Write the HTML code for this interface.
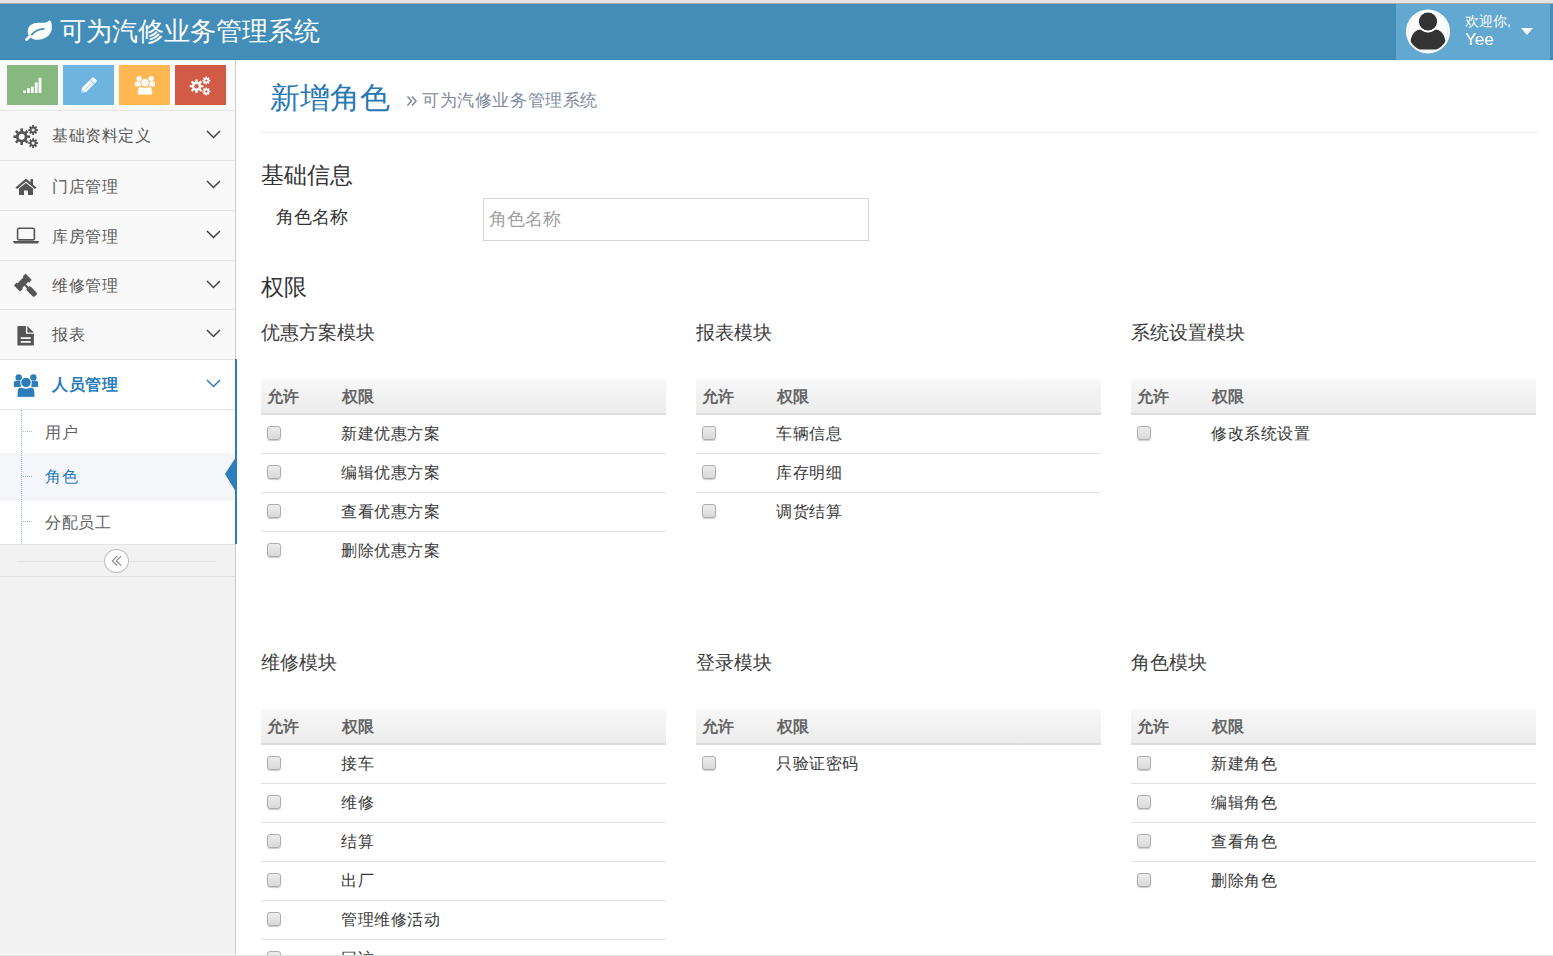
<!DOCTYPE html>
<html><head><meta charset="utf-8">
<style>
*{box-sizing:border-box}
html,body{margin:0;padding:0}
body{width:1553px;height:956px;overflow:hidden;position:relative;background:#fff;font-family:"Liberation Sans",sans-serif;color:#393939}
.abs{position:absolute}
.txt{position:absolute;white-space:nowrap;line-height:1}
#topstrip{left:0;top:0;width:1553px;height:3px;background:#e3e3e3}
#topline{left:0;top:3px;width:1553px;height:1px;background:#b2adaa}
#navbar{left:0;top:4px;width:1553px;height:56px;background:#438eb9}
#navline{left:0;top:59px;width:1553px;height:1px;background:#3a84b4}
#usr{left:1396px;top:4px;width:154px;height:56px;background:#62a8d1}
#botstrip{left:0;top:955px;width:1553px;height:1px;background:#dcdcdc}
/* sidebar */
#sidebar{left:0;top:60px;width:236px;height:894px;background:#f2f2f2;border-right:1px solid #cccccc}
.sc{top:65px;width:51px;height:40px}
.hl{height:1px;background:#e4e4e4}
.item{left:0;width:235px;background:#f9f9f9}
.mtxt{font-size:16.25px;letter-spacing:0.5px;color:#585858}
.chev{position:absolute;left:206px;width:15px;height:9px}

.ttl{font-size:18.75px;color:#3d3d3d;margin-top:1px}
.th{position:absolute;height:36px;background:linear-gradient(#f8f8f8,#ececec);border-bottom:2px solid #dddddd}
.tht{font-size:16.25px;font-weight:bold;color:#666666}
.rl{position:absolute;height:1px;background:#e1e1e1}
.cb{position:absolute;width:14px;height:14px;border:1px solid #adadad;border-radius:3px;background:linear-gradient(#ececec,#d9d9d9);box-shadow:0 1px 1px rgba(0,0,0,.2)}
.rt{font-size:16.4px;letter-spacing:0.5px;color:#393939}
</style></head>
<body>
<div id="topstrip" class="abs"></div>
<div id="topline" class="abs"></div>
<div id="navbar" class="abs"></div>
<div id="navline" class="abs"></div>
<div id="usr" class="abs"></div>

<!-- brand -->
<svg class="abs" style="left:20px;top:15px" width="36" height="30" viewBox="0 0 36 30">
 <path d="M29.5 5.2 C31.5 6 31.9 9 31.9 12.5 C31.9 19.5 25.5 24.8 17.5 24.8 C12 24.8 7.7 21.5 7.7 16.5 C7.7 11 12.5 7.8 18.5 7.8 L24 7.8 C26.5 7.8 28 6.5 29.5 5.2 Z" fill="#fff"/>
 <line x1="10.5" y1="20.8" x2="6.6" y2="24.6" stroke="#fff" stroke-width="2.8" stroke-linecap="round"/>
 <path d="M11.8 19.6 C14.5 16.3 18.5 14 23.8 13.8" fill="none" stroke="#438eb9" stroke-width="1.7" stroke-linecap="round"/>
</svg>
<div class="txt" style="left:60px;top:19px;font-size:25.8px;color:#fff">可为汽修业务管理系统</div>

<!-- user -->
<svg class="abs" style="left:1405px;top:8.5px" width="46" height="46" viewBox="0 0 46 46">
 <circle cx="23" cy="22.5" r="22" fill="#fff"/>
 <circle cx="23" cy="22.5" r="19.5" fill="none" stroke="#dfeaf2" stroke-width="0.8"/>
 <defs><clipPath id="cc"><circle cx="23" cy="22.5" r="20"/></clipPath></defs>
 <g clip-path="url(#cc)" fill="#333">
  <circle cx="23" cy="12.5" r="9.3"/>
  <path d="M5 40.5 L5.5 33 C6 25 11 20.5 16 20.5 C18 22.5 20.5 23.5 23 23.5 C25.5 23.5 28 22.5 30 20.5 C35 20.5 40 25 40.5 33 L41 40.5 Z"/>
 </g>
 <circle cx="23" cy="12.5" r="10" fill="none" stroke="#fff" stroke-width="1.5"/>
</svg>
<div class="txt" style="left:1465px;top:14.5px;font-size:13.5px;color:#fff">欢迎你,</div>
<div class="txt" style="left:1465px;top:30.5px;font-size:17px;color:#fff">Yee</div>
<svg class="abs" style="left:1520px;top:27px" width="14" height="9" viewBox="0 0 14 9"><path d="M1 1 L13 1 L7 8 Z" fill="#fff"/></svg>



<!-- MAIN -->
<div class="txt" style="left:270px;top:82.5px;font-size:30px;color:#2679b5">新增角色</div>
<svg class="abs" style="left:406px;top:95px" width="12" height="12" viewBox="0 0 12 12"><path d="M1.5 1.5 L5.5 6 L1.5 10.5 M6 1.5 L10 6 L6 10.5" fill="none" stroke="#8089a0" stroke-width="1.6"/></svg>
<div class="txt" style="left:422px;top:91.5px;font-size:17.2px;letter-spacing:0.6px;color:#8089a0">可为汽修业务管理系统</div>
<div class="abs" style="left:261px;top:132px;width:1276px;height:0;border-top:1px dotted #e2e2e2"></div>
<div class="txt" style="left:261px;top:163.5px;font-size:23px;color:#333">基础信息</div>
<div class="txt" style="left:276px;top:209px;font-size:17.5px;color:#333">角色名称</div>
<div class="abs" style="left:483px;top:198px;width:386px;height:43px;border:1px solid #d5d5d5;background:#fff"></div>
<div class="txt" style="left:489px;top:211px;font-size:17.5px;color:#a0a0a0">角色名称</div>
<div class="txt" style="left:261px;top:275.5px;font-size:23px;color:#333">权限</div>
<div class="txt ttl" style="left:261px;top:323px">优惠方案模块</div>
<div class="th" style="left:261px;top:379px;width:405px"></div>
<div class="txt tht" style="left:267px;top:388px">允许</div>
<div class="txt tht" style="left:342px;top:388px">权限</div>
<div class="cb" style="left:267px;top:426px"></div>
<div class="txt rt" style="left:341px;top:425px">新建优惠方案</div>
<div class="rl" style="left:261px;top:453px;width:405px"></div>
<div class="cb" style="left:267px;top:465px"></div>
<div class="txt rt" style="left:341px;top:464px">编辑优惠方案</div>
<div class="rl" style="left:261px;top:492px;width:405px"></div>
<div class="cb" style="left:267px;top:504px"></div>
<div class="txt rt" style="left:341px;top:503px">查看优惠方案</div>
<div class="rl" style="left:261px;top:531px;width:405px"></div>
<div class="cb" style="left:267px;top:543px"></div>
<div class="txt rt" style="left:341px;top:542px">删除优惠方案</div>
<div class="txt ttl" style="left:696px;top:323px">报表模块</div>
<div class="th" style="left:696px;top:379px;width:405px"></div>
<div class="txt tht" style="left:702px;top:388px">允许</div>
<div class="txt tht" style="left:777px;top:388px">权限</div>
<div class="cb" style="left:702px;top:426px"></div>
<div class="txt rt" style="left:776px;top:425px">车辆信息</div>
<div class="rl" style="left:696px;top:453px;width:405px"></div>
<div class="cb" style="left:702px;top:465px"></div>
<div class="txt rt" style="left:776px;top:464px">库存明细</div>
<div class="rl" style="left:696px;top:492px;width:405px"></div>
<div class="cb" style="left:702px;top:504px"></div>
<div class="txt rt" style="left:776px;top:503px">调货结算</div>
<div class="txt ttl" style="left:1131px;top:323px">系统设置模块</div>
<div class="th" style="left:1131px;top:379px;width:405px"></div>
<div class="txt tht" style="left:1137px;top:388px">允许</div>
<div class="txt tht" style="left:1212px;top:388px">权限</div>
<div class="cb" style="left:1137px;top:426px"></div>
<div class="txt rt" style="left:1211px;top:425px">修改系统设置</div>
<div class="txt ttl" style="left:261px;top:653px">维修模块</div>
<div class="th" style="left:261px;top:709px;width:405px"></div>
<div class="txt tht" style="left:267px;top:718px">允许</div>
<div class="txt tht" style="left:342px;top:718px">权限</div>
<div class="cb" style="left:267px;top:756px"></div>
<div class="txt rt" style="left:341px;top:755px">接车</div>
<div class="rl" style="left:261px;top:783px;width:405px"></div>
<div class="cb" style="left:267px;top:795px"></div>
<div class="txt rt" style="left:341px;top:794px">维修</div>
<div class="rl" style="left:261px;top:822px;width:405px"></div>
<div class="cb" style="left:267px;top:834px"></div>
<div class="txt rt" style="left:341px;top:833px">结算</div>
<div class="rl" style="left:261px;top:861px;width:405px"></div>
<div class="cb" style="left:267px;top:873px"></div>
<div class="txt rt" style="left:341px;top:872px">出厂</div>
<div class="rl" style="left:261px;top:900px;width:405px"></div>
<div class="cb" style="left:267px;top:912px"></div>
<div class="txt rt" style="left:341px;top:911px">管理维修活动</div>
<div class="rl" style="left:261px;top:939px;width:405px"></div>
<div class="cb" style="left:267px;top:951px"></div>
<div class="txt rt" style="left:341px;top:950px">回访</div>
<div class="txt ttl" style="left:696px;top:653px">登录模块</div>
<div class="th" style="left:696px;top:709px;width:405px"></div>
<div class="txt tht" style="left:702px;top:718px">允许</div>
<div class="txt tht" style="left:777px;top:718px">权限</div>
<div class="cb" style="left:702px;top:756px"></div>
<div class="txt rt" style="left:776px;top:755px">只验证密码</div>
<div class="txt ttl" style="left:1131px;top:653px">角色模块</div>
<div class="th" style="left:1131px;top:709px;width:405px"></div>
<div class="txt tht" style="left:1137px;top:718px">允许</div>
<div class="txt tht" style="left:1212px;top:718px">权限</div>
<div class="cb" style="left:1137px;top:756px"></div>
<div class="txt rt" style="left:1211px;top:755px">新建角色</div>
<div class="rl" style="left:1131px;top:783px;width:405px"></div>
<div class="cb" style="left:1137px;top:795px"></div>
<div class="txt rt" style="left:1211px;top:794px">编辑角色</div>
<div class="rl" style="left:1131px;top:822px;width:405px"></div>
<div class="cb" style="left:1137px;top:834px"></div>
<div class="txt rt" style="left:1211px;top:833px">查看角色</div>
<div class="rl" style="left:1131px;top:861px;width:405px"></div>
<div class="cb" style="left:1137px;top:873px"></div>
<div class="txt rt" style="left:1211px;top:872px">删除角色</div>

<!-- SIDEBAR -->
<div id="sidebar" class="abs"></div>
<div class="abs" style="left:0;top:60px;width:235px;height:1px;background:#fff"></div>
<div class="abs" style="left:0;top:61px;width:235px;height:49px;background:#fafafa"></div>
<div class="abs sc" style="left:7px;background:#87b87f"></div>
<div class="abs sc" style="left:63px;background:#6fb3e0"></div>
<div class="abs sc" style="left:119px;background:#ffb752"></div>
<div class="abs sc" style="left:175px;background:#d15b47"></div>
<!-- shortcut icons -->
<svg class="abs" style="left:23px;top:77px" width="20" height="17" viewBox="0 0 20 17" fill="#fff">
 <rect x="0.2" y="13.6" width="2.8" height="2.3"/><rect x="4" y="11.2" width="2.8" height="4.7"/><rect x="7.9" y="9.7" width="2.8" height="6.2"/><rect x="11.8" y="5.5" width="2.8" height="10.4"/><rect x="15.6" y="0.9" width="2.8" height="15"/>
</svg>
<svg class="abs" style="left:76px;top:73px" width="26" height="26" viewBox="0 0 26 26">
 <g transform="translate(5.4,19.6) rotate(-45) scale(0.86,1.12)">
  <path d="M0 0 L4.5 -2.6 L21.5 -2.6 C22.3 -2.6 22.8 -2.1 22.8 -1.3 L22.8 1.3 C22.8 2.1 22.3 2.6 21.5 2.6 L4.5 2.6 Z" fill="#fff"/>
  <line x1="5.5" y1="0.4" x2="16" y2="0.4" stroke="#6fb3e0" stroke-width="0.7"/>
  <line x1="17.8" y1="-2.8" x2="17.8" y2="2.8" stroke="#6fb3e0" stroke-width="0.9"/>
  <path d="M1.6 0 L3.4 -0.9 L3.4 0.9 Z" fill="#6fb3e0"/>
 </g>
</svg>
<svg class="abs" style="left:133.6px;top:75.3px" width="22" height="21" viewBox="0 0 26 25.6" fill="#fff">
 <circle cx="5.7" cy="4.4" r="3.2"/><circle cx="20.4" cy="4.4" r="3.2"/>
 <path d="M0.9 13.9 L0.9 10 C0.9 8.5 1.8 7.8 3 7.8 L7.8 7.8 L7.8 13.9 Z"/>
 <path d="M25.1 13.9 L25.1 10 C25.1 8.5 24.2 7.8 23 7.8 L18.4 7.8 L18.4 13.9 Z"/>
 <circle cx="13" cy="9.4" r="5.2" stroke="#ffb752" stroke-width="1"/>
 <path d="M5.4 24.3 C4.6 24.3 4 23.7 4 23 L4.4 18 C4.6 15.5 5.8 14.2 8 14.2 C10 15 11.5 15.3 13 15.3 C14.5 15.3 16 15 18 14.2 C20.2 14.2 21.4 15.5 21.6 18 L22 23 C22 23.7 21.4 24.3 20.6 24.3 Z" stroke="#ffb752" stroke-width="0.8"/>
</svg>
<svg class="abs" style="left:189px;top:76px" width="24" height="20" viewBox="0 0 24 20"><circle cx="7.5" cy="10.2" r="4.6" fill="#fff"/><g stroke="#fff" stroke-width="2.2"><line x1="0.70" y1="10.20" x2="14.30" y2="10.20"/><line x1="2.69" y1="5.39" x2="12.31" y2="15.01"/><line x1="7.50" y1="3.40" x2="7.50" y2="17.00"/><line x1="12.31" y1="5.39" x2="2.69" y2="15.01"/></g><circle cx="7.5" cy="10.2" r="2.3" fill="#d15b47"/><circle cx="17.3" cy="4.6" r="2.8" fill="#fff"/><g stroke="#fff" stroke-width="1.5"><line x1="13.30" y1="4.60" x2="21.30" y2="4.60"/><line x1="14.47" y1="1.77" x2="20.13" y2="7.43"/><line x1="17.30" y1="0.60" x2="17.30" y2="8.60"/><line x1="20.13" y1="1.77" x2="14.47" y2="7.43"/></g><circle cx="17.3" cy="4.6" r="1.2" fill="#d15b47"/><circle cx="17.3" cy="15.4" r="2.8" fill="#fff"/><g stroke="#fff" stroke-width="1.5"><line x1="13.30" y1="15.40" x2="21.30" y2="15.40"/><line x1="14.47" y1="12.57" x2="20.13" y2="18.23"/><line x1="17.30" y1="11.40" x2="17.30" y2="19.40"/><line x1="20.13" y1="12.57" x2="14.47" y2="18.23"/></g><circle cx="17.3" cy="15.4" r="1.2" fill="#d15b47"/></svg>
<div class="abs hl" style="left:0;top:110px;width:235px"></div>

<!-- menu items -->
<div class="abs item" style="top:111px;height:49px"></div>
<div class="abs hl" style="left:0;top:160px;width:235px"></div>
<div class="abs item" style="top:161px;height:49px"></div>
<div class="abs hl" style="left:0;top:210px;width:235px"></div>
<div class="abs item" style="top:211px;height:49px"></div>
<div class="abs hl" style="left:0;top:260px;width:235px"></div>
<div class="abs item" style="top:261px;height:48px"></div>
<div class="abs hl" style="left:0;top:309px;width:235px"></div>
<div class="abs item" style="top:310px;height:49px"></div>
<div class="abs hl" style="left:0;top:359px;width:235px"></div>
<div class="abs" style="left:0;top:360px;width:235px;height:184px;background:#fff"></div>
<div class="abs hl" style="left:0;top:409px;width:235px"></div>
<div class="abs" style="left:0;top:455px;width:235px;height:44px;background:#f4f6f9"></div>
<div class="abs" style="left:0;top:454px;width:235px;height:0;border-top:1px dotted #e0e0e0"></div>
<div class="abs" style="left:0;top:499px;width:235px;height:0;border-top:1px dotted #e0e0e0"></div>
<div class="abs hl" style="left:0;top:544px;width:235px"></div>
<div class="abs" style="left:21px;top:410px;width:0;height:134px;border-left:1px dotted #9dbdd6"></div>
<div class="abs" style="left:23px;top:431px;width:9px;height:0;border-top:1px dotted #9dbdd6"></div>
<div class="abs" style="left:23px;top:476px;width:9px;height:0;border-top:1px dotted #9dbdd6"></div>
<div class="abs" style="left:23px;top:521px;width:9px;height:0;border-top:1px dotted #9dbdd6"></div>
<div class="abs" style="left:235px;top:359px;width:2px;height:185px;background:#2b7dbc"></div>
<svg class="abs" style="left:225px;top:457px" width="11" height="35" viewBox="0 0 11 35"><path d="M11 0 L0 17 L11 35 Z" fill="#2b7dbc"/></svg>

<div class="txt mtxt" style="left:52px;top:127px">基础资料定义</div>
<div class="txt mtxt" style="left:52px;top:178px">门店管理</div>
<div class="txt mtxt" style="left:52px;top:228px">库房管理</div>
<div class="txt mtxt" style="left:52px;top:277px">维修管理</div>
<div class="txt mtxt" style="left:52px;top:326px">报表</div>
<div class="txt mtxt" style="left:52px;top:376px;color:#2b7dbc;font-weight:bold">人员管理</div>
<div class="txt mtxt" style="left:45px;top:423.5px;color:#616161">用户</div>
<div class="txt mtxt" style="left:45px;top:467.5px;color:#2b7dbc">角色</div>
<div class="txt mtxt" style="left:45px;top:513.5px;color:#616161">分配员工</div>

<svg class="chev" style="top:130px" viewBox="0 0 15 9"><path d="M1 1 L7.5 7.5 L14 1" fill="none" stroke="#444" stroke-width="1.5"/></svg>
<svg class="chev" style="top:180px" viewBox="0 0 15 9"><path d="M1 1 L7.5 7.5 L14 1" fill="none" stroke="#444" stroke-width="1.5"/></svg>
<svg class="chev" style="top:230px" viewBox="0 0 15 9"><path d="M1 1 L7.5 7.5 L14 1" fill="none" stroke="#444" stroke-width="1.5"/></svg>
<svg class="chev" style="top:280px" viewBox="0 0 15 9"><path d="M1 1 L7.5 7.5 L14 1" fill="none" stroke="#444" stroke-width="1.5"/></svg>
<svg class="chev" style="top:329px" viewBox="0 0 15 9"><path d="M1 1 L7.5 7.5 L14 1" fill="none" stroke="#444" stroke-width="1.5"/></svg>
<svg class="chev" style="top:379px" viewBox="0 0 15 9"><path d="M1 1 L7.5 7.5 L14 1" fill="none" stroke="#2b7dbc" stroke-width="1.5"/></svg>

<!-- menu icons -->
<svg class="abs" style="left:13px;top:125px" width="26" height="24" viewBox="0 0 26 24"><circle cx="8.7" cy="11.7" r="5.8" fill="#555"/><g stroke="#555" stroke-width="2.6"><line x1="0.40" y1="11.70" x2="17.00" y2="11.70"/><line x1="2.83" y1="5.83" x2="14.57" y2="17.57"/><line x1="8.70" y1="3.40" x2="8.70" y2="20.00"/><line x1="14.57" y1="5.83" x2="2.83" y2="17.57"/></g><circle cx="8.7" cy="11.7" r="3.0" fill="#f9f9f9"/><circle cx="20.1" cy="5" r="3.4" fill="#555"/><g stroke="#555" stroke-width="1.8"><line x1="15.20" y1="5.00" x2="25.00" y2="5.00"/><line x1="16.64" y1="1.54" x2="23.56" y2="8.46"/><line x1="20.10" y1="0.10" x2="20.10" y2="9.90"/><line x1="23.56" y1="1.54" x2="16.64" y2="8.46"/></g><circle cx="20.1" cy="5" r="1.6" fill="#f9f9f9"/><circle cx="20.1" cy="18.1" r="3.4" fill="#555"/><g stroke="#555" stroke-width="1.8"><line x1="15.20" y1="18.10" x2="25.00" y2="18.10"/><line x1="16.64" y1="14.64" x2="23.56" y2="21.56"/><line x1="20.10" y1="13.20" x2="20.10" y2="23.00"/><line x1="23.56" y1="14.64" x2="16.64" y2="21.56"/></g><circle cx="20.1" cy="18.1" r="1.6" fill="#f9f9f9"/></svg>
<svg class="abs" style="left:15px;top:178px" width="22" height="18" viewBox="0 0 22 18">
 <path d="M11 0.5 L0.5 9.5 L2 11 L11 3.5 L20 11 L21.5 9.5 L18 6.5 L18 1 L15.5 1 L15.5 4.3 Z" fill="#555"/>
 <path d="M4 10.5 L11 5 L18 10.5 L18 17 L13 17 L13 12.5 L9 12.5 L9 17 L4 17 Z" fill="#555"/>
</svg>
<svg class="abs" style="left:13px;top:227px" width="26" height="17" viewBox="0 0 26 17">
 <rect x="4.6" y="1.3" width="16.8" height="11.6" rx="1.5" fill="none" stroke="#555" stroke-width="1.6"/>
 <path d="M0 14 L26 14 L25 16.5 L1 16.5 Z" fill="#555"/>
</svg>
<svg class="abs" style="left:10px;top:270px" width="32" height="32" viewBox="0 0 32 32">
 <g transform="translate(12.8,12.6) rotate(-45)" fill="#555">
  <rect x="-7" y="-3.3" width="14" height="6.6"/>
  <rect x="-8.3" y="-4.4" width="4" height="8.8" rx="0.6"/>
  <rect x="4.3" y="-4.4" width="4" height="8.8" rx="0.6"/>
  <rect x="-1.1" y="3" width="2.2" height="4.5"/>
  <rect x="-2.7" y="7" width="5.4" height="11.2" rx="1.6"/>
 </g>
</svg>
<svg class="abs" style="left:17px;top:326px" width="18" height="20" viewBox="0 0 18 20">
 <path d="M0.4 0.8 C0.4 0.3 0.7 0 1.2 0 L8.9 0 L8.9 7.8 L16.9 7.8 L16.9 18.8 C16.9 19.3 16.6 19.6 16.1 19.6 L1.2 19.6 C0.7 19.6 0.4 19.3 0.4 18.8 Z" fill="#555"/>
 <path d="M10.4 0 L16.9 6.5 L10.4 6.5 Z" fill="#555"/>
 <rect x="3.7" y="11.2" width="10" height="1.8" fill="#f9f9f9"/><rect x="3.7" y="15" width="10" height="1.8" fill="#f9f9f9"/>
</svg>
<svg class="abs" style="left:13px;top:373px" width="26" height="25" viewBox="0 0 26 25" fill="#2b7dbc">
 <circle cx="5.7" cy="4.4" r="3.2"/><circle cx="20.4" cy="4.4" r="3.2"/>
 <path d="M0.9 13.9 L0.9 10 C0.9 8.5 1.8 7.8 3 7.8 L7.8 7.8 L7.8 13.9 Z"/>
 <path d="M25.1 13.9 L25.1 10 C25.1 8.5 24.2 7.8 23 7.8 L18.4 7.8 L18.4 13.9 Z"/>
 <circle cx="13" cy="9.4" r="5.2" stroke="#fff" stroke-width="1"/>
 <path d="M5.4 24.3 C4.6 24.3 4 23.7 4 23 L4.4 18 C4.6 15.5 5.8 14.2 8 14.2 C10 15 11.5 15.3 13 15.3 C14.5 15.3 16 15 18 14.2 C20.2 14.2 21.4 15.5 21.6 18 L22 23 C22 23.7 21.4 24.3 20.6 24.3 Z" stroke="#fff" stroke-width="0.8"/>
</svg>

<!-- collapse -->
<div class="abs" style="left:17px;top:561px;width:199px;height:1px;background:#e0e0e0"></div>
<div class="abs" style="left:0;top:576px;width:235px;height:1px;background:#e0e0e0"></div>
<div class="abs" style="left:104px;top:549px;width:25px;height:24px;border-radius:50%;background:#fff;border:1px solid #bbbbbb"></div>
<svg class="abs" style="left:111px;top:554px" width="12" height="13" viewBox="0 0 12 13"><path d="M6.2 2.1 L1.4 6.9 L6.2 11.7 M10.1 2.1 L5.3 6.9 L10.1 11.7" fill="none" stroke="#8a8a8a" stroke-width="1.2"/></svg>

<div id="botstrip" class="abs"></div>
</body></html>
